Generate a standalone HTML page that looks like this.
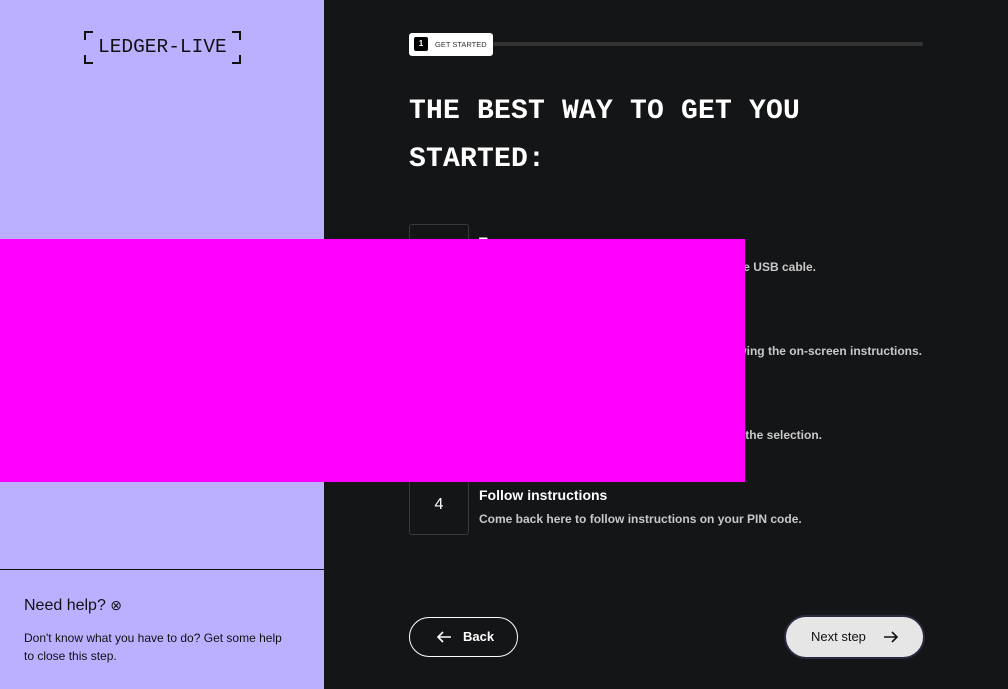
<!DOCTYPE html>
<html><head><style>
*{margin:0;padding:0;box-sizing:border-box}
body{width:1008px;height:689px;overflow:hidden;background:#141517;font-family:"Liberation Sans",sans-serif;position:relative}
.left{position:absolute;left:0;top:0;width:324px;height:689px;background:#bbb0ff}
.logo{position:absolute;left:84px;top:31px;width:157px;height:33px}
.logo span{position:absolute;left:14px;top:5px;font-family:"Liberation Mono",monospace;font-size:19.5px;color:#111;white-space:nowrap;letter-spacing:0}
.c{position:absolute;width:9px;height:9px;border-color:#111;border-style:solid;border-width:0}
.sep{position:absolute;left:0;top:569px;width:324px;height:1px;background:#111}
.help{position:absolute;left:24px;top:597px;font-size:16px;color:#111}
.helpt{position:absolute;left:24px;top:629px;width:280px;font-size:12px;line-height:18px;color:#111}
.pill{position:absolute;left:409px;top:33px;width:84px;height:23px;background:#fff;border-radius:3px}
.pill b{position:absolute;left:5px;top:4px;width:14px;height:14px;background:#000;color:#fff;font-size:8px;text-align:center;line-height:14px;border-radius:2px}
.pill i{position:absolute;left:26px;top:7px;font-style:normal;font-size:7.5px;color:#333}
.bar{position:absolute;left:493px;top:42px;width:430px;height:4px;background:#333;border-radius:2px}
h1{position:absolute;left:409px;top:88px;font-family:"Liberation Mono",monospace;font-weight:bold;color:#fff;font-size:28px;line-height:48px;letter-spacing:0.2px;white-space:nowrap}
.box{position:absolute;left:409px;width:60px;height:60px;border:1px solid #3a3a3d;border-radius:3px;color:#fff;font-size:16px;text-align:center;line-height:58px}
.t{position:absolute;left:479px;color:#fff;font-size:14px;font-weight:bold}
.d{position:absolute;color:#c8c8c8;font-size:12px;font-weight:bold;white-space:nowrap}
.mag{position:absolute;left:0;top:239px;width:745px;height:243px;background:#f0f}
.back{position:absolute;left:409px;top:617px;width:109px;height:40px;border:1px solid #fff;border-radius:20px;color:#fff;font-size:13px;font-weight:bold;line-height:38px;padding-left:53px}
.next{position:absolute;left:784px;top:615px;width:141px;height:44px;background:#e6e6e6;border:2px solid #2a2a40;border-radius:22px;color:#111;font-size:13px;line-height:40px;padding-left:25px}
</style></head><body>
<div class="left">
 <div class="logo">
  <div class="c" style="left:0;top:0;border-left-width:2px;border-top-width:2px"></div>
  <div class="c" style="right:0;top:0;border-right-width:2px;border-top-width:2px"></div>
  <div class="c" style="left:0;bottom:0;border-left-width:2px;border-bottom-width:2px"></div>
  <div class="c" style="right:0;bottom:0;border-right-width:2px;border-bottom-width:2px"></div>
  <span>LEDGER-LIVE</span>
 </div>
 <div class="sep"></div>
 <div class="help">Need help? <span style="font-size:14px">&#8855;</span></div>
 <div class="helpt">Don't know what you have to do? Get some help<br>to close this step.</div>
</div>
<div class="pill"><b>1</b><i>GET STARTED</i></div>
<div class="bar"></div>
<h1>THE BEST WAY TO GET YOU<br>STARTED:</h1>
<div class="box" style="top:224px">1</div>
<div class="t" style="top:234px">Turn on</div>
<div class="d" style="right:192px;top:260px">Connect your device with the USB cable.</div>
<div class="d" style="right:86px;top:344px">Set up your device following the on-screen instructions.</div>
<div class="d" style="right:186px;top:428px">Press both buttons to confirm the selection.</div>
<div class="box" style="top:475px">4</div>
<div class="t" style="top:487px">Follow instructions</div>
<div class="d" style="left:479px;top:512px">Come back here to follow instructions on your PIN code.</div>
<div class="mag"></div>
<div class="back"><svg style="position:absolute;left:26px;top:12px" width="16" height="14" viewBox="0 0 16 14"><path d="M15 7H2M7 2L2 7l5 5" fill="none" stroke="#fff" stroke-width="1.6"/></svg>Back</div>
<div class="next">Next step<svg style="position:absolute;left:97px;top:13px" width="16" height="14" viewBox="0 0 16 14"><path d="M1 7h13M9 2l5 5-5 5" fill="none" stroke="#111" stroke-width="1.6"/></svg></div>
</body></html>
